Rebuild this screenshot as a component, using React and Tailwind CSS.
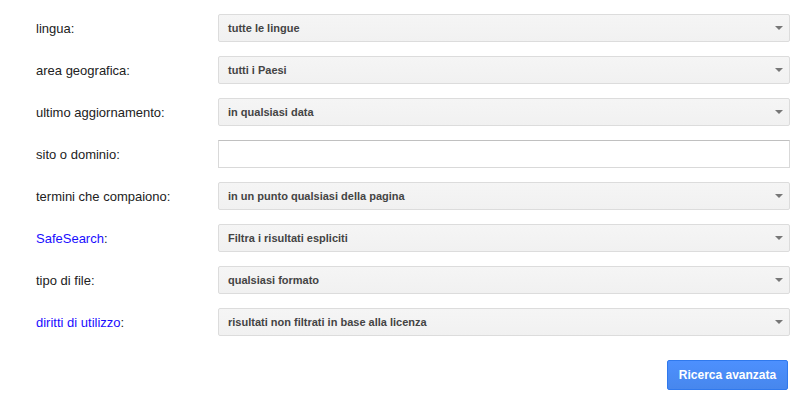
import React from "react";

const rows = [
  { label: "lingua:", value: "tutte le lingue" },
  { label: "area geografica:", value: "tutti i Paesi" },
  { label: "ultimo aggiornamento:", value: "in qualsiasi data" },
  { label: "sito o dominio:", input: true },
  { label: "termini che compaiono:", value: "in un punto qualsiasi della pagina" },
  { label: "SafeSearch", link: true, value: "Filtra i risultati espliciti" },
  { label: "tipo di file:", value: "qualsiasi formato" },
  { label: "diritti di utilizzo", link: true, value: "risultati non filtrati in base alla licenza" },
];

function Select({ value }) {
  return (
    <div className="flex h-[28px] w-[572px] items-center justify-between rounded-[2px] border border-[#dcdcdc] bg-gradient-to-b from-[#f5f5f5] to-[#f1f1f1] pl-[9px] pr-[5px]">
      <span className="text-[11px] font-bold text-[#444]">{value}</span>
      <svg width="8" height="4" viewBox="0 0 8 4" className="mr-[1px]">
        <path d="M0 0 L8 0 L4 4 Z" fill="#777" />
      </svg>
    </div>
  );
}

export default function App() {
  return (
    <div
      className="w-[805px] h-[415px] bg-white pl-[36px] pt-[14px]"
      style={{ fontFamily: "Arial, 'Liberation Sans', sans-serif" }}
    >
      <div className="flex flex-col gap-[14px]">
        {rows.map((r, i) => (
          <div key={i} className="flex items-center h-[28px]">
            <div className="w-[182px] pt-[1px] text-[13px] text-[#222]">
              {r.link ? (
                <>
                  <span className="text-[#1a0dff]">{r.label}</span>:
                </>
              ) : (
                r.label
              )}
            </div>
            {r.input ? (
              <div className="h-[28px] w-[572px] border border-[#d9d9d9] border-t-[#c0c0c0] bg-white" />
            ) : (
              <Select value={r.value} />
            )}
          </div>
        ))}
      </div>
      <div className="flex w-[752px] justify-end pt-[24px]">
        <button className="h-[30px] w-[121px] rounded-[2px] border border-[#3079ed] bg-gradient-to-b from-[#4d90fe] to-[#4787ed] text-[12px] font-bold text-white">
          Ricerca avanzata
        </button>
      </div>
    </div>
  );
}
